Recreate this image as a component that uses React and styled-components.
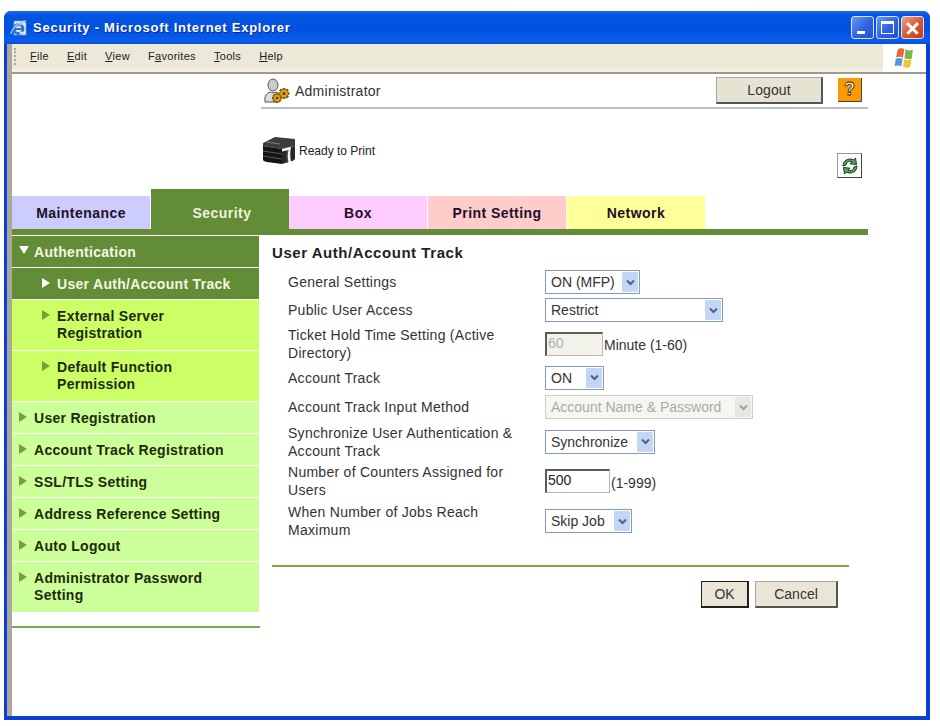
import React from 'react';
import styled, { createGlobalStyle } from 'styled-components';

const GlobalStyle = createGlobalStyle`
  html, body {
    margin: 0;
    background: #fff;
    font-family: "Liberation Sans", Arial, sans-serif;
    color: #222;
  }
`;

const tabs = [
  { label: 'Maintenance', color: '#ccccff' },
  { label: 'Security', active: true },
  { label: 'Box', color: '#ffccff' },
  { label: 'Print Setting', color: '#ffcccc' },
  { label: 'Network', color: '#ffff99' },
];

const Select = ({ w, disabled, children }) => (
  <SelectBox $w={w} $disabled={disabled}>
    {children}
    <SelectArrow $disabled={disabled}>
      <svg width="9" height="7" viewBox="0 0 9 7">
        <path d="M1 1.500l3.500 3.500L8 1.500" fill="none" stroke="currentColor" strokeWidth="2" />
      </svg>
    </SelectArrow>
  </SelectBox>
);

const App = () => (
  <>
    <GlobalStyle />
    <Page>
      <Window>
        <TitleBar>
          <IeIcon />
          <TitleText>Security - Microsoft Internet Explorer</TitleText>
          <Controls>
            <WinButton><MinGlyph /></WinButton>
            <WinButton><MaxGlyph /></WinButton>
            <WinButton $close><CloseGlyph /></WinButton>
          </Controls>
        </TitleBar>
        <Client>
          <MenuBar>
            <Gripper />
            <MenuList>
              <span><u>F</u>ile</span>
              <span><u>E</u>dit</span>
              <span><u>V</u>iew</span>
              <span>F<u>a</u>vorites</span>
              <span><u>T</u>ools</span>
              <span><u>H</u>elp</span>
            </MenuList>
            <FlagBox><FlagIcon /></FlagBox>
          </MenuBar>
          <Content>
            <Header>
              <UserRow>
                <AdminIcon />
                <UserName>Administrator</UserName>
                <LogoutButton>Logout</LogoutButton>
                <HelpButton>?</HelpButton>
              </UserRow>
              <StatusRow>
                <PrinterIcon />
                <StatusText>Ready to Print</StatusText>
                <RefreshButton><RefreshIcon /></RefreshButton>
              </StatusRow>
            </Header>
            <TabRow>
              {tabs.map((t) => (
                <Tab key={t.label} $active={t.active} $color={t.color}>{t.label}</Tab>
              ))}
            </TabRow>
            <Main>
              <Sidebar>
                <SideList>
                  <SideItem $kind="active"><Arrow $down />Authentication</SideItem>
                  <SideItem $kind="active" $sub><Arrow $light />User Auth/Account Track</SideItem>
                  <SideItem $kind="sub" $sub $two><Arrow />External Server<br />Registration</SideItem>
                  <SideItem $kind="sub" $sub $two><Arrow />Default Function<br />Permission</SideItem>
                  <SideItem><Arrow />User Registration</SideItem>
                  <SideItem><Arrow />Account Track Registration</SideItem>
                  <SideItem><Arrow />SSL/TLS Setting</SideItem>
                  <SideItem><Arrow />Address Reference Setting</SideItem>
                  <SideItem><Arrow />Auto Logout</SideItem>
                  <SideItem $two><Arrow />Administrator Password<br />Setting</SideItem>
                </SideList>
                <SideRule />
              </Sidebar>
              <Panel>
                <PanelTitle>User Auth/Account Track</PanelTitle>
                <Form>
                  <Row $h={28}>
                    <Label>General Settings</Label>
                    <Field><Select w={95}>ON (MFP)</Select></Field>
                  </Row>
                  <Row $h={28}>
                    <Label>Public User Access</Label>
                    <Field><Select w={178}>Restrict</Select></Field>
                  </Row>
                  <Row $h={39}>
                    <Label>Ticket Hold Time Setting (Active Directory)</Label>
                    <Field><TextBox $w={58} $disabled>60</TextBox><Unit>Minute (1-60)</Unit></Field>
                  </Row>
                  <Row $h={29}>
                    <Label>Account Track</Label>
                    <Field><Select w={59}>ON</Select></Field>
                  </Row>
                  <Row $h={30}>
                    <Label>Account Track Input Method</Label>
                    <Field><Select w={208} disabled>Account Name &amp; Password</Select></Field>
                  </Row>
                  <Row $h={39}>
                    <Label>Synchronize User Authentication &amp; Account Track</Label>
                    <Field><Select w={110}>Synchronize</Select></Field>
                  </Row>
                  <Row $h={40}>
                    <Label>Number of Counters Assigned for Users</Label>
                    <Field><TextBox $w={65}>500</TextBox><Unit>(1-999)</Unit></Field>
                  </Row>
                  <Row $h={40}>
                    <Label>When Number of Jobs Reach Maximum</Label>
                    <Field><Select w={87}>Skip Job</Select></Field>
                  </Row>
                </Form>
                <PanelRule />
                <Actions>
                  <ActionButton $primary $w={48}>OK</ActionButton>
                  <ActionButton $w={83}>Cancel</ActionButton>
                </Actions>
              </Panel>
            </Main>
          </Content>
        </Client>
      </Window>
    </Page>
  </>
);

const IeIcon = () => (
  <TitleIcon viewBox="0 0 18 18">
    <path d="M4 2h10l2 2v12H4z" fill="#dfe6ee" stroke="#8fa7c4" strokeWidth=".6" />
    <circle cx="8.500" cy="10" r="4.500" fill="none" stroke="#2a78d6" strokeWidth="2.800" />
    <path d="M4.500 10h8.500" stroke="#2a78d6" strokeWidth="1.800" />
    <path d="M9.500 13.800h5" stroke="#dfe6ee" strokeWidth="2" />
    <path d="M1 15C2 9 8 3 15 2c-2 2-4 3-6 5" fill="none" stroke="#bcd2ee" strokeWidth="1.200" />
  </TitleIcon>
);

const FlagIcon = () => (
  <svg width="24" height="23" viewBox="0 0 22 22">
    <path d="M4 2.500c2-1.500 4-1.500 6.500-.5L9 10c-2.500-1-4.500-1-6.500 0z" fill="#e8663a" />
    <path d="M11.500 2.500c2.500 1 4.500 1 7 .2L17.500 11c-2.500.8-4.500.7-7-.2z" fill="#7ab648" />
    <path d="M2.200 11.200c2-1 4.200-1 6.500 0L7.500 18.500c-2.500-1-4.500-1-6.500 0z" fill="#4d9be0" />
    <path d="M10.200 11.600c2.500 1 4.500 1 7 .2l-1.200 7.400c-2.500.8-4.500.7-7-.2z" fill="#f2c23a" />
  </svg>
);

const AdminIcon = () => (
  <svg width="27" height="27" viewBox="0 0 27 27">
    <ellipse cx="10" cy="8" rx="5" ry="6" fill="#cbcbcb" stroke="#555" />
    <path d="M2 25c-1-6 2-9 5-10 2 1 4 1 6 0 2 1 3 2 3 4l-3 6z" fill="#dadada" stroke="#555" />
    <g stroke="#7a5506" strokeWidth="2.600">
      <path d="M14 16v10M9 21h10M10.500 17.500l7 7M17.500 17.500l-7 7" />
      <path d="M21 11v11M15.500 16.500h11M17 12.500l8 8M25 12.500l-8 8" />
    </g>
    <g fill="#e0a01c" stroke="#7a5506" strokeWidth=".6">
      <circle cx="14" cy="21" r="3.800" />
      <circle cx="21" cy="16.500" r="4.200" />
    </g>
    <circle cx="21" cy="16.500" r="1.500" fill="#5d4106" />
    <circle cx="14" cy="21" r="1.300" fill="#5d4106" />
  </svg>
);

const PrinterIcon = () => (
  <PrinterSvg viewBox="0 0 34 29">
    <path d="M1 7 13 1l20 2v7L20 13 1 10z" fill="#3c3c3c" />
    <path d="M1 10l19 3v15L5 26c-3-.5-4-1-4-3z" fill="#141414" />
    <path d="M20 13l13-3v12c0 2-1 2.500-3 3l-10 3z" fill="#262626" />
    <path d="M1 15l19 3M1 20l19 3M25 12v15" stroke="#5a5a5a" strokeWidth="1" />
    <path d="M20 13l9-2.200c-1 5-1 10 0 15l-2.500.8c-1-4.500-1-8.500 0-12.600L20 15.500z" fill="#f4f4f4" />
    <path d="M4 6l14 2" stroke="#808080" strokeWidth="1" />
  </PrinterSvg>
);

const RefreshIcon = () => (
  <svg width="20" height="20" viewBox="0 0 20 20">
    <path d="M3 10c0-4 3-7 7-7 1.500 0 2.500.3 3.500 1L15.500 2l1 6.500-6.500-.7 2-2c-2.500-1.500-5.500.2-6 3.200z" fill="#58a45a" stroke="#143c1c" strokeWidth="1" />
    <path d="M17 10c0 4-3 7-7 7-1.500 0-2.500-.3-3.500-1l-2 2-1-6.500 6.500.7-2 2c2.500 1.500 5.500-.2 6-3.200z" fill="#58a45a" stroke="#143c1c" strokeWidth="1" />
  </svg>
);

export default App;

const Page = styled.div`
  width: 940px;
  height: 726px;
  padding: 11px 0 0 4px;
  box-sizing: border-box;
  overflow: hidden;
`;

const Window = styled.div`
  width: 926px;
  height: 709px;
  display: flex;
  flex-direction: column;
  background: #0a3fd8;
  border-radius: 7px 7px 0 0;
  overflow: hidden;
`;

const TitleBar = styled.div`
  height: 33px;
  flex: none;
  display: flex;
  align-items: center;
  padding: 0 6px;
  background: linear-gradient(#1f6cf0 0, #0455e2 12%, #0250de 55%, #0a5cec 88%, #0a50d8 100%);
`;

const TitleIcon = styled.svg`
  width: 18px;
  height: 18px;
  flex: none;
`;

const TitleText = styled.div`
  margin-left: 5px;
  font-size: 13px;
  font-weight: 700;
  letter-spacing: 0.75px;
  color: #fff;
  text-shadow: 1px 1px 0 #0a2d9c;
`;

const Controls = styled.div`
  margin-left: auto;
  display: flex;
  gap: 2px;
`;

const WinButton = styled.div`
  width: 23px;
  height: 23px;
  box-sizing: border-box;
  border: 1px solid #d8e4fb;
  border-radius: 3px;
  position: relative;
  background: ${(p) => (p.$close
    ? 'linear-gradient(135deg, #f0a088 0, #dc5a30 50%, #c43c14 100%)'
    : 'linear-gradient(135deg, #6c97f0 0, #2f62e0 55%, #1f4fd0 100%)')};
`;

const MinGlyph = styled.div`
  position: absolute;
  left: 5px;
  bottom: 4px;
  width: 8px;
  height: 3px;
  background: #fff;
`;

const MaxGlyph = styled.div`
  position: absolute;
  left: 4px;
  top: 4px;
  width: 13px;
  height: 13px;
  box-sizing: border-box;
  border: 1px solid #fff;
  border-top-width: 3px;
`;

const CloseGlyph = styled.div`
  position: absolute;
  inset: 0;
  &::before, &::after {
    content: '';
    position: absolute;
    left: 3px;
    top: 9.500px;
    width: 15px;
    height: 2.500px;
    background: #fff;
    transform: rotate(45deg);
  }
  &::after {
    transform: rotate(-45deg);
  }
`;

const Client = styled.div`
  flex: 1;
  margin: 0 4px 4px 3px;
  border-left: 5px solid #aca899;
  background: #fff;
  display: flex;
  flex-direction: column;
  min-height: 0;
`;

const MenuBar = styled.div`
  height: 30px;
  flex: none;
  box-sizing: border-box;
  display: flex;
  padding-bottom: 5px;
  background: linear-gradient(#ece9d8 0 80%, #f4f2e8 100%);
  border-bottom: 2px solid #9d9a8c;
`;

const Gripper = styled.div`
  width: 2px;
  height: 17px;
  margin: 4px 0 0 2px;
  border-left: 2px dotted #a8a594;
`;

const MenuList = styled.div`
  display: flex;
  align-items: center;
  gap: 18px;
  padding-left: 12px;
  font-size: 11px;
  color: #222;
  letter-spacing: 0.3px;
`;

const FlagBox = styled.div`
  margin: 0 0 -5px auto;
  width: 43px;
  background: #fff;
  display: flex;
  align-items: center;
  justify-content: center;
`;

const Content = styled.div`
  flex: 1;
  display: flex;
  flex-direction: column;
  width: 856px;
`;

const Header = styled.div`
  padding-left: 249px;
`;

const UserRow = styled.div`
  height: 30px;
  display: flex;
  align-items: flex-start;
  border-bottom: 2px solid #bdbdbd;
  padding: 3px 6px 0 2px;
`;

const UserName = styled.span`
  margin: 6px 0 0 5px;
  font-size: 14px;
  letter-spacing: 0.25px;
  color: #333;
`;

const LogoutButton = styled.div`
  margin-left: auto;
  width: 107px;
  height: 27px;
  box-sizing: border-box;
  background: #e6e3d3;
  border: 1px solid #a9a89c;
  border-right: 2px solid #555;
  border-bottom: 2px solid #555;
  font-size: 14px;
  letter-spacing: 0.1px;
  display: flex;
  align-items: center;
  justify-content: center;
  color: #333;
`;

const HelpButton = styled.div`
  margin: 1px 0 0 15px;
  width: 24px;
  height: 24px;
  box-sizing: border-box;
  background: #ff9900;
  border-right: 1px solid #444;
  border-bottom: 1px solid #444;
  color: #fff;
  font-size: 18px;
  font-weight: 700;
  text-align: center;
  line-height: 23px;
  -webkit-text-stroke: 0.8px #222;
`;

const StatusRow = styled.div`
  height: 80px;
  display: flex;
  align-items: flex-start;
  padding: 0 6px 0 1px;
`;

const PrinterSvg = styled.svg`
  width: 34px;
  height: 29px;
  margin-top: 27px;
  flex: none;
`;

const StatusText = styled.span`
  margin: 35px 0 0 3px;
  font-size: 12px;
  color: #222;
`;

const RefreshButton = styled.div`
  margin: 44px 0 0 auto;
  width: 25px;
  height: 25px;
  box-sizing: border-box;
  border: 1px solid #999;
  border-right-color: #444;
  border-bottom-color: #444;
  display: flex;
  align-items: center;
  justify-content: center;
`;

const TabRow = styled.div`
  display: flex;
  align-items: flex-end;
  gap: 1px;
  height: 40px;
  border-bottom: 6px solid #628c35;
`;

const Tab = styled.div`
  width: 138px;
  height: ${(p) => (p.$active ? '40px' : '33px')};
  margin-right: ${(p) => (p.$active ? '-1px' : '0')};
  padding-left: ${(p) => (p.$active ? '4px' : '0')};
  padding-top: ${(p) => (p.$active ? '7px' : '0')};
  box-sizing: border-box;
  display: flex;
  align-items: center;
  justify-content: center;
  background: ${(p) => (p.$active ? '#628c35' : p.$color)};
  color: ${(p) => (p.$active ? '#ecf5dc' : '#20102a')};
  font-size: 14px;
  font-weight: 700;
  letter-spacing: 0.45px;
`;

const Main = styled.div`
  display: flex;
`;

const Sidebar = styled.div`
  width: 247px;
  flex: none;
`;

const SideList = styled.div`
  display: flex;
  flex-direction: column;
  gap: 1px;
  padding-top: 1px;
`;

const sideBg = { active: '#628c35', sub: '#ccff66' };

const SideItem = styled.div`
  position: relative;
  box-sizing: border-box;
  padding: 8px 8px ${(p) => (p.$two ? '8px' : '6px')} ${(p) => (p.$sub ? '45px' : '22px')};
  background: ${(p) => sideBg[p.$kind] || '#ccff99'};
  color: ${(p) => (p.$kind === 'active' ? '#f1f7e4' : '#1c2a0a')};
  font-size: 14px;
  line-height: 17px;
  font-weight: 700;
  letter-spacing: 0.3px;
`;

const Arrow = styled.span`
  position: absolute;
  top: 10px;
  left: ${(p) => (p.$down ? '7px' : 'auto')};
  margin-left: ${(p) => (p.$down ? '0' : '-15px')};
  width: 0;
  height: 0;
  ${(p) => (p.$down
    ? 'border-left: 5px solid transparent; border-right: 5px solid transparent; border-top: 8px solid #fff;'
    : `border-top: 5px solid transparent; border-bottom: 5px solid transparent; border-left: 8px solid ${p.$light ? '#fff' : '#7c9c3c'};`)}
`;

const SideRule = styled.div`
  margin-top: 14px;
  height: 2px;
  width: 248px;
  background: #7fa352;
`;

const Panel = styled.div`
  flex: none;
  width: 577px;
  margin-left: 13px;
  padding-top: 9px;
`;

const PanelTitle = styled.div`
  font-size: 15px;
  line-height: 18px;
  font-weight: 700;
  letter-spacing: 0.55px;
  color: #222;
`;

const Form = styled.div`
  margin-top: 6px;
  padding-left: 16px;
`;

const Row = styled.div`
  display: grid;
  grid-template-columns: 257px 1fr;
  align-items: center;
  height: ${(p) => p.$h}px;
`;

const Label = styled.div`
  width: 240px;
  font-size: 14px;
  line-height: 18px;
  letter-spacing: 0.27px;
  color: #333;
`;

const Field = styled.div`
  display: flex;
  align-items: center;
`;

const SelectBox = styled.div`
  width: ${(p) => p.$w}px;
  height: 24px;
  box-sizing: border-box;
  display: flex;
  align-items: center;
  justify-content: space-between;
  padding: 1px 1px 1px 5px;
  background: ${(p) => (p.$disabled ? '#f6f6f0' : '#fff')};
  border: 1px solid ${(p) => (p.$disabled ? '#cfcfc4' : '#7f9db9')};
  color: ${(p) => (p.$disabled ? '#aaa' : '#333')};
  font-size: 14px;
  white-space: nowrap;
`;

const SelectArrow = styled.span`
  flex: none;
  width: 16px;
  height: 20px;
  margin-left: 3px;
  border-radius: 1px;
  display: flex;
  align-items: center;
  justify-content: center;
  background: ${(p) => (p.$disabled ? '#e8e8e2' : '#c4d6f6')};
  color: ${(p) => (p.$disabled ? '#a0a0a0' : '#4d6185')};
`;

const TextBox = styled.div`
  width: ${(p) => p.$w}px;
  height: 24px;
  box-sizing: border-box;
  padding-left: 1px;
  border: 2px solid #5a5a5a;
  border-right: 1px solid #b8b8b0;
  border-bottom: 1px solid #b8b8b0;
  background: ${(p) => (p.$disabled ? '#f2f2ea' : '#fff')};
  color: ${(p) => (p.$disabled ? '#b0b0a8' : '#222')};
  font-size: 14px;
  line-height: 18px;
`;

const Unit = styled.span`
  margin-left: 1px;
  padding-top: 3px;
  font-size: 14px;
  color: #333;
`;

const PanelRule = styled.div`
  margin-top: 24px;
  height: 2px;
  background: #7fa352;
`;

const Actions = styled.div`
  display: flex;
  justify-content: flex-end;
  gap: 6px;
  padding: 14px 11px 0 0;
`;

const ActionButton = styled.div`
  width: ${(p) => p.$w}px;
  height: 27px;
  box-sizing: border-box;
  background: #e9e6d6;
  border: 1px solid ${(p) => (p.$primary ? '#222' : '#a9a89c')};
  border-right: 2px solid ${(p) => (p.$primary ? '#222' : '#555')};
  border-bottom: 2px solid ${(p) => (p.$primary ? '#222' : '#555')};
  display: flex;
  align-items: center;
  justify-content: center;
  font-size: 14px;
  color: #333;
`;
